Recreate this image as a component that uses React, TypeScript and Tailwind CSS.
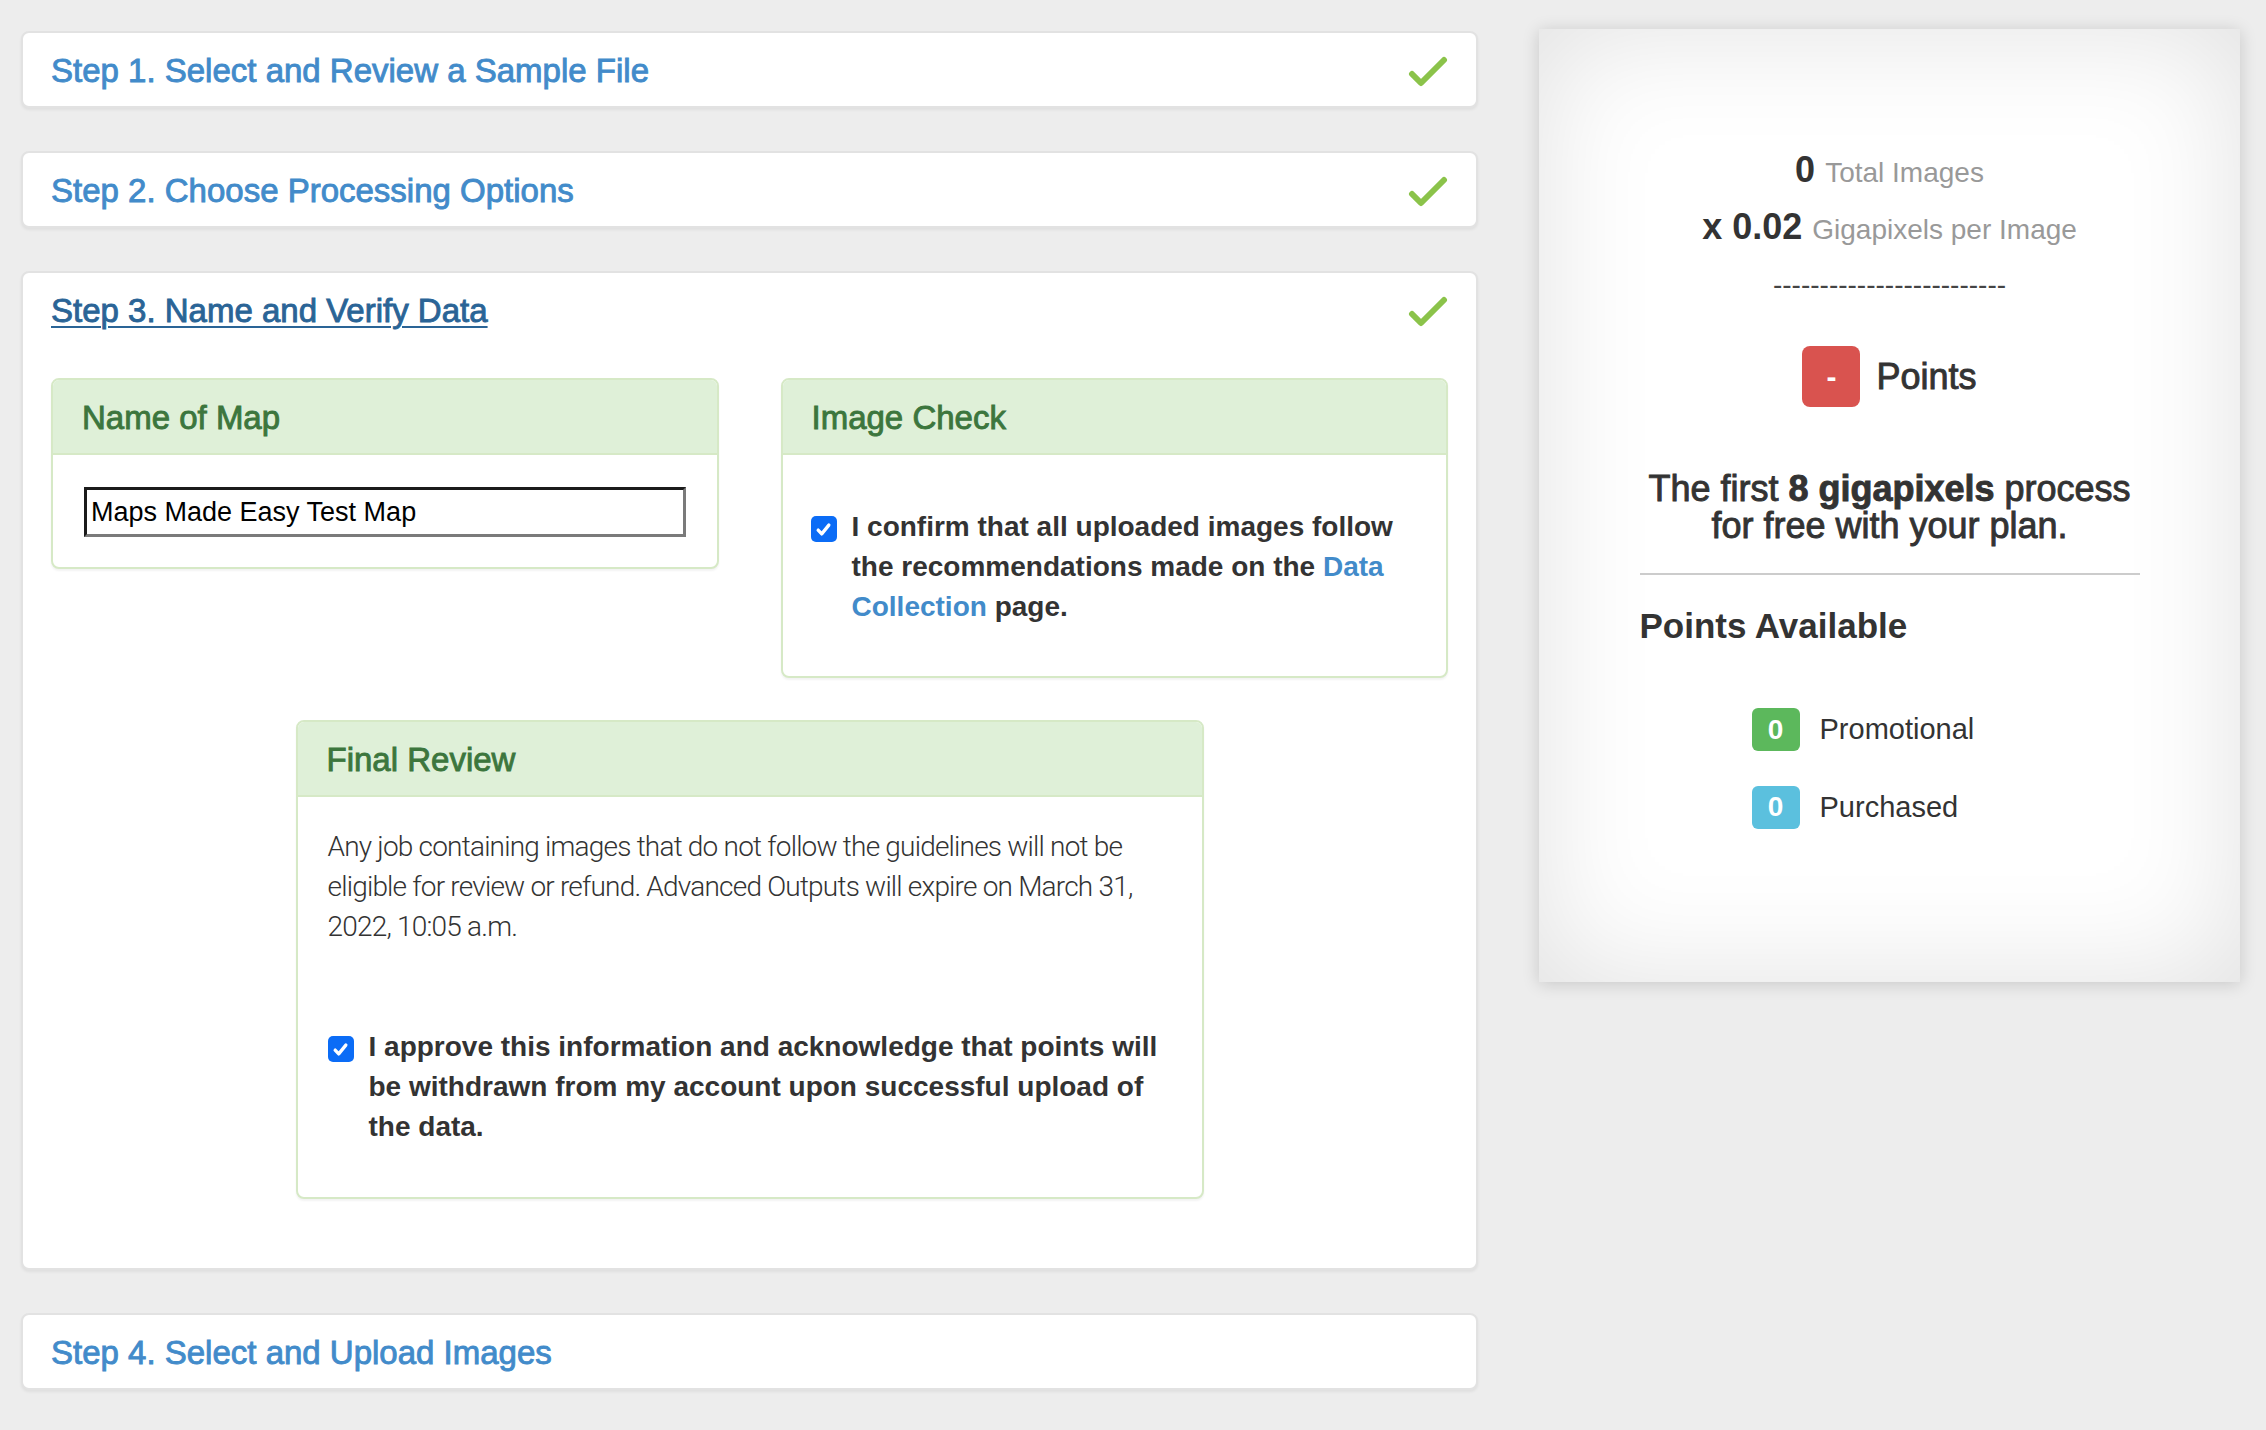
import type { ReactNode } from 'react'

// slightly heavier strokes for the medium-weight headings
const medium = '[-webkit-text-stroke:0.9px]'

function DoneCheck() {
  return (
    <svg viewBox="0 0 40 32" className="h-[32px] w-[40px] shrink-0" fill="none">
      <path
        d="M4 19l9 9L36 5"
        stroke="#8bc34a"
        strokeWidth="6"
        strokeLinecap="round"
        strokeLinejoin="round"
      />
    </svg>
  )
}

function StepPanel({
  title,
  done,
  open,
  children,
}: {
  title: string
  done?: boolean
  open?: boolean
  children?: ReactNode
}) {
  return (
    <section className="rounded-[8px] border-2 border-[#e2e2e2] bg-white shadow-[0_2px_3px_rgba(0,0,0,0.06)]">
      <div className="flex items-center justify-between px-[28px] pt-[20px] pb-[18px]">
        <h2
          className={`text-[33px] leading-[35px] ${medium} ${
            open
              ? 'text-[#2a6496] underline decoration-[2px] underline-offset-[4px]'
              : 'text-[#428bca]'
          }`}
        >
          {title}
        </h2>
        {done && <DoneCheck />}
      </div>
      {children && <div className="px-[28px] pt-[32px] pb-[69px]">{children}</div>}
    </section>
  )
}

function GreenPanel({
  title,
  className = '',
  bodyClassName = '',
  children,
}: {
  title: string
  className?: string
  bodyClassName?: string
  children: ReactNode
}) {
  return (
    <div
      className={`overflow-hidden rounded-[8px] border-2 border-[#d6e9c6] bg-white shadow-[0_2px_2px_rgba(0,0,0,0.05)] ${className}`}
    >
      <div className="border-b-2 border-[#d6e9c6] bg-[#dff0d8] px-[29px] pt-[20px] pb-[18px]">
        <h3 className={`text-[33px] leading-[35px] text-[#3c763d] ${medium}`}>{title}</h3>
      </div>
      <div className={bodyClassName}>{children}</div>
    </div>
  )
}

function CheckRow({ className = '', children }: { className?: string; children: ReactNode }) {
  return (
    <label className={`flex gap-[15px] text-[28px] font-bold leading-[40px] text-[#333] ${className}`}>
      <span className="mt-[9px] flex h-[26px] w-[26px] shrink-0 items-center justify-center rounded-[5px] bg-[#0b6cf6]">
        <svg viewBox="0 0 16 16" className="h-[19px] w-[19px]" fill="none">
          <path
            d="M3.5 8.5l3 3.2 6-7.4"
            stroke="white"
            strokeWidth="2.8"
            strokeLinecap="round"
            strokeLinejoin="round"
          />
        </svg>
      </span>
      <span>{children}</span>
    </label>
  )
}

function CountBadge({ value, color }: { value: string; color: string }) {
  return (
    <span
      className={`flex h-[43px] w-[48px] items-center justify-center rounded-[6px] text-[28px] font-bold text-white ${color}`}
    >
      {value}
    </span>
  )
}

function SummaryCard() {
  return (
    <aside className="w-[701px] shrink-0 bg-white pt-[112px] pb-[153px] text-center text-[#333] shadow-[0_2px_16px_rgba(0,0,0,0.16),inset_0_0_120px_rgba(0,0,0,0.12)]">
      <p className="h-[57px] text-[36px] leading-[57px]">
        <b>0</b> <span className="text-[28px] text-[#999]">Total Images</span>
      </p>
      <p className="h-[57px] text-[36px] leading-[57px]">
        <b>x 0.02</b> <span className="text-[28px] text-[#999]">Gigapixels per Image</span>
      </p>
      <p className="mt-[10px] text-[28px] leading-[40px] text-[#444]">-------------------------</p>

      <div className="mt-[41px] flex items-center justify-center gap-[16px]">
        <span className="flex h-[61px] w-[58px] items-center justify-center rounded-[8px] bg-[#d9534f] text-[30px] font-bold text-white">
          -
        </span>
        <span className={`text-[36px] leading-[40px] ${medium}`}>Points</span>
      </div>

      <p className={`mx-auto mt-[63px] w-[500px] text-[36px] leading-[37px] ${medium}`}>
        The first <b>8 gigapixels</b> process for free with your plan.
      </p>

      <div className="mx-auto mt-[29px] h-[2px] w-[500px] bg-[#cccccc]" />

      <h4 className="mx-auto mt-[31px] w-[500px] text-left text-[35px] font-bold leading-[40px]">
        Points Available
      </h4>

      <ul className="mx-auto mt-[62px] flex w-[500px] flex-col gap-[34px] pl-[112px] text-left text-[29px]">
        <li className="flex items-center gap-[20px]">
          <CountBadge value="0" color="bg-[#5cb85c]" />
          <span>Promotional</span>
        </li>
        <li className="flex items-center gap-[20px]">
          <CountBadge value="0" color="bg-[#5bc0de]" />
          <span>Purchased</span>
        </li>
      </ul>
    </aside>
  )
}

export default function App() {
  return (
    <div className="min-h-screen bg-[#ededed] font-['Liberation_Sans',Arial,sans-serif] text-[#333]">
      <div className="flex items-start gap-[61px] pl-[21px] pt-[29px] pb-[40px]">
        <div className="flex w-[1457px] flex-col gap-[43px] pt-[2px]">
          <StepPanel title="Step 1. Select and Review a Sample File" done />
          <StepPanel title="Step 2. Choose Processing Options" done />
          <StepPanel title="Step 3. Name and Verify Data" done open>
            <div className="grid grid-cols-2 items-start gap-x-[62px]">
              <GreenPanel title="Name of Map" bodyClassName="px-[31px] pt-[32px] pb-[30px]">
                <input
                  defaultValue="Maps Made Easy Test Map"
                  className="block h-[50px] w-full border-[3px] border-t-[#1b1b1b] border-l-[#1b1b1b] border-r-[#7a7a7a] border-b-[#7a7a7a] bg-white px-[4px] text-[27px] text-black outline-none"
                />
              </GreenPanel>
              <GreenPanel title="Image Check" bodyClassName="px-[28px] pt-[52px] pb-[49px]">
                <CheckRow>
                  I confirm that all uploaded images follow the recommendations made on the{' '}
                  <a href="#" className="text-[#428bca]">
                    Data Collection
                  </a>{' '}
                  page.
                </CheckRow>
              </GreenPanel>
            </div>

            <GreenPanel
              title="Final Review"
              className="mx-auto mt-[42px] w-[908px]"
              bodyClassName="px-[30px] pt-[30px] pb-[50px]"
            >
              <p className="font-['Roboto',sans-serif] text-[28px] font-light leading-[40px] tracking-[-0.8px] text-[#333]">
                Any job containing images that do not follow the guidelines will not be eligible for
                review or refund. Advanced Outputs will expire on March 31, 2022, 10:05 a.m.
              </p>
              <CheckRow className="mt-[80px]">
                I approve this information and acknowledge that points will be withdrawn from my
                account upon successful upload of the data.
              </CheckRow>
            </GreenPanel>
          </StepPanel>
          <StepPanel title="Step 4. Select and Upload Images" />
        </div>
        <SummaryCard />
      </div>
    </div>
  )
}
